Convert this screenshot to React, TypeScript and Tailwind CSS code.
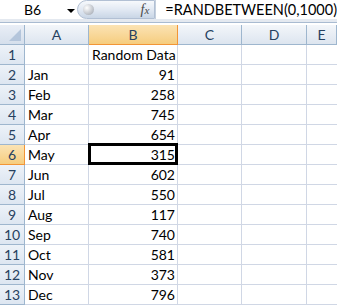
import React from 'react';

const months = ['Jan', 'Feb', 'Mar', 'Apr', 'May', 'Jun', 'Jul', 'Aug', 'Sep', 'Oct', 'Nov', 'Dec'];
const values = [91, 258, 745, 654, 315, 602, 550, 117, 740, 581, 373, 796];

const colHeads = ['A', 'B', 'C', 'D', 'E'];

const FormulaBar: React.FC = () => (
    <div className="flex h-[19px] items-center bg-white">
        {/* name box */}
        <div className="relative flex h-full w-[82px] items-center">
            <span className="pl-[24px] text-[14px] text-black">B6</span>
            <span className="absolute left-[67px] top-[9px] h-0 w-0 border-x-[4px] border-t-[4px] border-x-transparent border-t-black" />
        </div>
        {/* fx pill */}
        <div className="relative flex h-[19px] w-[84px] items-center justify-end rounded-l-full border border-[#b2c0d4] bg-gradient-to-b from-[#f7f9fc] via-[#e2e9f3] to-[#c9d6e6] pr-[5px]">
            <span className="absolute left-[5px] top-[3px] h-[11px] w-[11px] rounded-full bg-[radial-gradient(circle_at_35%_35%,#ffffff,#b7bcc4_70%,#9aa0aa)]" />
            <span className="font-['Liberation_Serif',serif] text-[14px] italic leading-none text-[#4a4a4a]">
                f<span className="text-[11px]">x</span>
            </span>
        </div>
        <div className="flex h-full flex-1 items-center border-l border-[#c5d0de] pl-[9px] text-[14.5px] text-black">
            =RANDBETWEEN(0,1000)
        </div>
    </div>
);

const rowHead = 'flex items-center justify-center border-r border-b border-[#9eb6ce] bg-gradient-to-b from-[#edf2f8] to-[#dde6f1] text-[14px] leading-none text-[#27415f]';
const rowHeadSel = 'flex items-center justify-center border-r border-b border-[#f29536] bg-gradient-to-b from-[#fbe3b4] to-[#f6cd7e] text-[14px] leading-none text-[#27415f]';
const cell = 'border-r border-b border-[#d0d7e5]';

const App: React.FC = () => {
    return (
        <div className="h-[307px] w-[337px] overflow-hidden bg-white font-['Lato',sans-serif] text-black">
            <FormulaBar />
            <div className="h-[3px] bg-[#e4e9f0]" />
            <div className="h-[1px] bg-[#a9bbd1]" />
            <div className="h-[2px] bg-white" />

            <div className="grid grid-cols-[25px_64px_89px_64px_65px_1fr] auto-rows-[20px]">
                {/* header row */}
                <div className="relative border-r border-b border-[#9eb6ce] bg-gradient-to-b from-[#e9eef6] to-[#d5dfec]">
                    <svg className="absolute bottom-[3px] right-[3px]" width="12" height="12" viewBox="0 0 12 12">
                        <polygon points="12,0 12,12 0,12" fill="#b4c5db" />
                    </svg>
                </div>
                {colHeads.map((c) => (
                    <div
                        key={c}
                        className={
                            c === 'B'
                                ? 'flex items-center justify-center border-r border-b border-[#f29536] bg-gradient-to-b from-[#fbe3b4] to-[#f6cd7e] text-[14px] leading-none text-[#27415f]'
                                : 'flex items-center justify-center border-r border-b border-[#9eb6ce] bg-gradient-to-b from-[#f3f6fa] to-[#dde5ef] text-[14px] leading-none text-[#27415f]'
                        }
                    >
                        {c}
                    </div>
                ))}

                {/* row 1 */}
                <div className={rowHead}>1</div>
                <div className={cell} />
                <div className="flex items-center whitespace-nowrap border-r border-b border-[#d0d7e5] pl-[3px] text-[14px] leading-none">Random Data</div>
                <div className={cell} />
                <div className={cell} />
                <div className="border-b border-[#d0d7e5]" />

                {months.map((m, i) => {
                    const sel = i === 4;
                    return (
                        <React.Fragment key={m}>
                            <div className={sel ? rowHeadSel : rowHead}>{i + 2}</div>
                            <div className="flex items-center border-r border-b border-[#d0d7e5] pl-[3px] text-[14px] leading-none">{m}</div>
                            <div className="relative flex items-center justify-end border-r border-b border-[#d0d7e5] pr-[2px] text-[14px] leading-none">
                                {values[i]}
                                {sel && <span className="absolute -left-[1px] -top-[2px] h-[22px] w-[90px] border-[3px] border-black" />}
                            </div>
                            <div className={cell} />
                            <div className={cell} />
                            <div className="border-b border-[#d0d7e5]" />
                        </React.Fragment>
                    );
                })}
            </div>
        </div>
    );
};

export default App;
